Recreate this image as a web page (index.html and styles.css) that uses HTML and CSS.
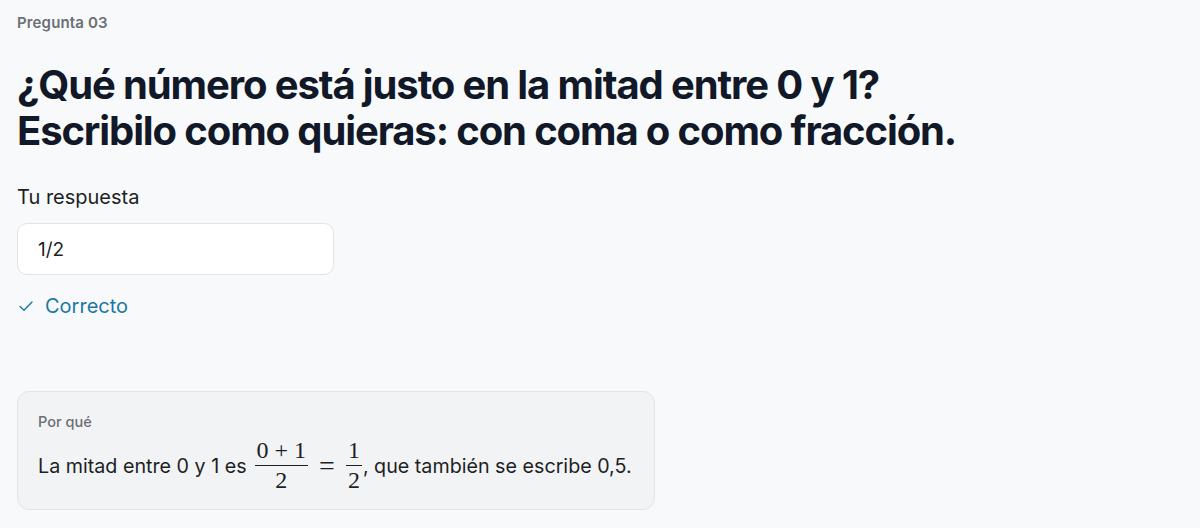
FILE: index.html
```html
<!DOCTYPE html>
<html lang="es">
<head>
<meta charset="utf-8">
<link rel="stylesheet" href="styles.css">
</head>
<body>
<main class="page">
  <div class="eyebrow">Pregunta 03</div>
  <h1 class="title">¿Qué número está justo en la mitad entre 0 y 1?<br>Escribilo como quieras: con coma o como fracción.</h1>
  <label class="label">Tu respuesta</label>
  <div class="input">1/2</div>
  <div class="status">
    <svg class="check" viewBox="0 0 16 16" width="16" height="16"><path d="M2 8.5l4 3.8 8-8.3" fill="none" stroke="currentColor" stroke-width="1.4" stroke-linecap="round" stroke-linejoin="round"/></svg>
    <span>Correcto</span>
  </div>
  <section class="why">
    <div class="why-title">Por qué</div>
    <p class="why-text"><span>La mitad entre 0 y 1 es</span><span class="math"><span class="frac"><span class="num">0<span class="op">+</span>1</span><span class="den">2</span></span><span class="eq">=</span><span class="frac"><span class="num">1</span><span class="den">2</span></span></span><span>, que también se escribe 0,5.</span></p>
  </section>
</main>
</body>
</html>
```

FILE: styles.css
```css
* { box-sizing: border-box; }
html, body { margin: 0; padding: 0; }
body {
  background: #f8f9fb;
  font-family: Inter, "Noto Sans", sans-serif;
  color: #111827;
}
.page {
  display: flex;
  flex-direction: column;
  align-items: flex-start;
  padding: 14px 17px 0;
}
.eyebrow {
  font-size: 15px;
  line-height: 18px;
  font-weight: 600;
  color: #6b6f76;
  letter-spacing: 0.01em;
}
.title {
  margin: 30px 0 0;
  font-size: 40px;
  line-height: 46px;
  font-weight: 700;
  letter-spacing: -0.028em;
  color: #111827;
}
.label {
  margin-top: 31px;
  font-size: 20px;
  line-height: 24px;
  color: #1c1f24;
}
.input {
  margin-top: 14px;
  width: 317px;
  height: 52px;
  border: 1px solid #e1e3e7;
  border-radius: 10px;
  background: #ffffff;
  padding: 0 20px;
  display: flex;
  align-items: center;
  font-size: 19px;
  color: #1c1f24;
}
.status {
  margin-top: 19px;
  display: flex;
  align-items: center;
  gap: 11px;
  color: #1b78a4;
  font-size: 20px;
  line-height: 24px;
}
.check { width: 16px; height: 16px; margin-left: 1px; }
.why {
  margin-top: 73px;
  width: 638px;
  background: #f2f3f5;
  border: 1px solid #e2e4e8;
  border-radius: 12px;
  padding: 21px 20px 15px;
}
.why-title {
  font-size: 14.5px;
  line-height: 18px;
  font-weight: 500;
  color: #6b6f76;
}
.why-text {
  margin: 7px 0 0;
  font-size: 19.7px;
  line-height: 24px;
  color: #1c1f24;
  display: flex;
  align-items: center;
  white-space: pre;
}
.math {
  display: inline-flex;
  align-items: center;
  font-family: "Liberation Serif", "DejaVu Serif", serif;
  font-size: 24px;
  margin-left: 8px;
  margin-right: 1px;
}
.frac {
  display: inline-flex;
  flex-direction: column;
  align-items: center;
}
.num {
  padding: 0 2px 3px;
  border-bottom: 1px solid #1c1f24;
  line-height: 24px;
}
.op { margin: 0 6px; }
.den {
  line-height: 28px;
}
.eq { margin: 0 11px; font-size: 28px; line-height: 24px; }
```
